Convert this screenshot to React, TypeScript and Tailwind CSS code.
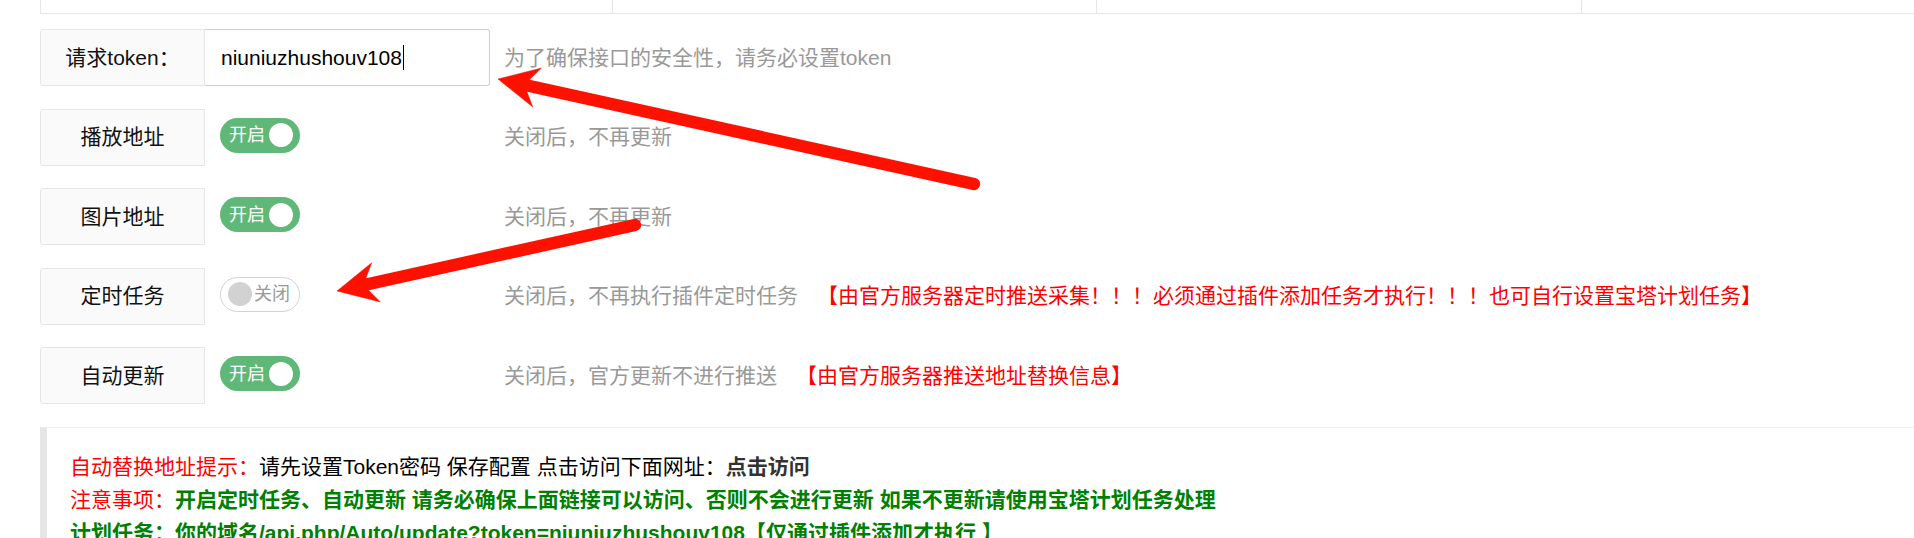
import React from 'react';

const FONT = "[font-family:'Liberation_Sans','Noto_Sans_CJK_SC',sans-serif]";

type Pt = [number, number];

function Arrow({ tip, tail }: { tip: Pt; tail: Pt }) {
  const dx = tail[0] - tip[0];
  const dy = tail[1] - tip[1];
  const len = Math.hypot(dx, dy);
  const ux = dx / len;
  const uy = dy / len;
  const nx = -uy;
  const ny = ux;
  const p = (a: number, b: number) => [tip[0] + ux * a + nx * b, tip[1] + uy * a + ny * b];
  const pts = [p(0, 0), p(40, -20), p(31, -6.2), p(31, 6.2), p(40, 20)]
    .map(([x, y]) => `${x.toFixed(1)},${y.toFixed(1)}`)
    .join(' ');
  const s = p(30, 0);
  return (
    <g fill="#ff1100" stroke="#ff1100">
      <line x1={s[0]} y1={s[1]} x2={tail[0]} y2={tail[1]} strokeWidth={12.4} strokeLinecap="round" />
      <polygon points={pts} strokeWidth={0.5} strokeLinejoin="round" />
    </g>
  );
}

function Label({ children }: { children: React.ReactNode }) {
  return (
    <div className="flex h-[57px] w-[165px] shrink-0 items-center justify-center rounded-l-[3px] border border-[#e6e6e6] bg-[#fafafa] text-[21px] text-[#111]">
      {children}
    </div>
  );
}

function Switch({ on }: { on: boolean }) {
  if (on) {
    return (
      <div className="mt-[9px] ml-[15px] flex h-[35px] w-[80px] items-center justify-between rounded-full bg-[#5fb878] pr-[7px] pl-[9px]">
        <span className="text-[18px] leading-none text-white">开启</span>
        <span className="h-[24px] w-[24px] rounded-full bg-white" />
      </div>
    );
  }
  return (
    <div className="mt-[9px] ml-[15px] flex h-[35px] w-[80px] items-center gap-[2px] rounded-full border border-[#d2d2d2] bg-white pl-[7px]">
      <span className="h-[24px] w-[24px] rounded-full bg-[#d2d2d2]" />
      <span className="text-[18px] leading-none text-[#999]">关闭</span>
    </div>
  );
}

const switches = [
  { label: '播放地址', on: true, hint: '关闭后，不再更新', extra: '' },
  { label: '图片地址', on: true, hint: '关闭后，不再更新', extra: '' },
  {
    label: '定时任务',
    on: false,
    hint: '关闭后，不再执行插件定时任务',
    extra: '【由官方服务器定时推送采集！！！必须通过插件添加任务才执行！！！也可自行设置宝塔计划任务】',
  },
  { label: '自动更新', on: true, hint: '关闭后，官方更新不进行推送', extra: '【由官方服务器推送地址替换信息】' },
];

export default function App() {
  return (
    <div className={`relative h-[538px] w-[1914px] overflow-hidden bg-white ${FONT}`}>
      <div className="pl-[40px]">
        {/* tail of the table above */}
        <div className="flex h-[14px] border-b border-l border-[#e6e6e6]">
          <div className="w-[572px] border-r border-[#e6e6e6]" />
          <div className="w-[484px] border-r border-[#e6e6e6]" />
          <div className="w-[485px] border-r border-[#e6e6e6]" />
          <div className="flex-1" />
        </div>

        <div className="mt-[15px] flex flex-col gap-[22.5px]">
          <div className="flex h-[57px] items-center">
            <Label>请求token：</Label>
            <div className="flex h-[57px] w-[285px] items-center rounded-r-[3px] border border-l-0 border-[#cfcfcf] pl-[16px] text-[21px] text-black">
              niuniuzhushouv108
              <span className="ml-px h-[25px] w-px bg-black" />
            </div>
            <div className="ml-[14px] text-[21px] text-[#999]">为了确保接口的安全性，请务必设置token</div>
          </div>

          {switches.map((row) => (
            <div key={row.label} className="flex h-[57px] items-start">
              <Label>{row.label}</Label>
              <div className="flex w-[285px] shrink-0">
                <Switch on={row.on} />
              </div>
              <div className="ml-[14px] flex h-[57px] items-center text-[21px] text-[#999]">
                {row.hint}
                {row.extra && <span className="ml-[19px] text-[#ff0000]">{row.extra}</span>}
              </div>
            </div>
          ))}

          <div className="border-t border-l-[7px] border-[#eeeeee] border-l-[#e6e6e6] pt-[22px] pl-[23px] text-[21px] leading-[33px]">
            <div>
              <span className="text-[#ff0000]">自动替换地址提示：</span>
              <span className="text-black">请先设置Token密码 保存配置 点击访问下面网址：</span>
              <span className="font-bold text-[#333]">点击访问</span>
            </div>
            <div>
              <span className="text-[#ff0000]">注意事项：</span>
              <span className="font-bold text-[#008000]">
                开启定时任务、自动更新 请务必确保上面链接可以访问、否则不会进行更新 如果不更新请使用宝塔计划任务处理
              </span>
            </div>
            <div className="font-bold text-[#008000]">
              计划任务：你的域名/api.php/Auto/update?token=niuniuzhushouv108【仅通过插件添加才执行 】
            </div>
          </div>
        </div>
      </div>

      <svg className="pointer-events-none absolute top-0 left-0" width={1914} height={538}>
        <Arrow tip={[498, 79]} tail={[974, 184]} />
        <Arrow tip={[337, 291]} tail={[635, 225]} />
      </svg>
    </div>
  );
}
